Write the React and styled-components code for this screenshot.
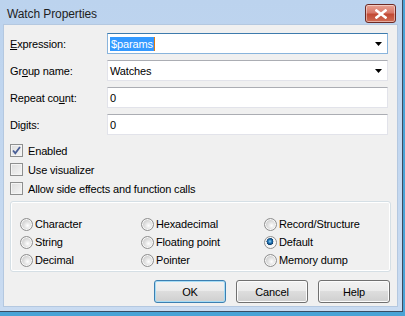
import styled, { createGlobalStyle } from "styled-components";

const GlobalStyle = createGlobalStyle`
  html, body {
    margin: 0;
    padding: 0;
    background: #4aa3d6;
  }
  body {
    font-family: "Liberation Sans", Arial, sans-serif;
    font-size: 11px;
    letter-spacing: -0.15px;
    color: #000;
  }
`;

const fields = [
  { label: "Expression:", idx: 0, value: "$params", combo: true, focused: true },
  { label: "Group name:", idx: 2, value: "Watches", combo: true },
  { label: "Repeat count:", idx: 9, value: "0" },
  { label: "Digits:", idx: 2, value: "0" },
];

const checks = [
  { label: "Enabled", checked: true },
  { label: "Use visualizer" },
  { label: "Allow side effects and function calls" },
];

const radios = [
  "Character", "Hexadecimal", "Record/Structure",
  "String", "Floating point", "Default",
  "Decimal", "Pointer", "Memory dump",
];

function AccessLabel({ text, idx }) {
  return (
    <Label>
      {text.slice(0, idx)}
      <u>{text[idx]}</u>
      {text.slice(idx + 1)}
    </Label>
  );
}

function Arrow() {
  return (
    <svg width="7" height="4" viewBox="0 0 7 4">
      <path d="M0 0h7L3.5 4z" fill="#000" />
    </svg>
  );
}

function CheckMark() {
  return (
    <svg width="9" height="9" viewBox="0 0 9 9">
      <path d="M1 4.5l2.3 2.7L8 1" stroke="#4a5f97" strokeWidth="1.8" fill="none" />
    </svg>
  );
}

export default function App() {
  return (
    <>
      <GlobalStyle />
      <Window>
        <TitleBar>
          <Title>Watch Properties</Title>
          <CloseButton>
            <svg width="12" height="10" viewBox="0 0 12 10">
              <path d="M1.5 1.5l9 7M10.5 1.5l-9 7" stroke="#fff" strokeWidth="2.6" strokeLinecap="square" />
            </svg>
          </CloseButton>
        </TitleBar>
        <Client>
          <Form>
            {fields.map((f) => (
              <Row key={f.label}>
                <AccessLabel text={f.label} idx={f.idx} />
                <Field $focused={f.focused}>
                  {f.focused ? (
                    <Selected>{f.value}</Selected>
                  ) : (
                    <span>{f.value}</span>
                  )}
                  {f.combo && (
                    <ArrowBox>
                      <Arrow />
                    </ArrowBox>
                  )}
                </Field>
              </Row>
            ))}
          </Form>
          <Checks>
            {checks.map((c) => (
              <CheckRow key={c.label}>
                <CheckBox>{c.checked && <CheckMark />}</CheckBox>
                <span>{c.label}</span>
              </CheckRow>
            ))}
          </Checks>
          <GroupBox>
            {radios.map((r) => (
              <RadioItem key={r}>
                <Radio $on={r === "Default"} />
                <span>{r}</span>
              </RadioItem>
            ))}
          </GroupBox>
          <Buttons>
            <Button $default>OK</Button>
            <Button>Cancel</Button>
            <Button>Help</Button>
          </Buttons>
        </Client>
      </Window>
    </>
  );
}

const Window = styled.div`
  background: linear-gradient(#bcd3ee, #c9dbf1);
  border-right: 1px solid #3b4c62;
  border-bottom: 1px solid #3b4c62;
  display: flex;
  flex-direction: column;
  padding: 0 4px 4px 3px;
  width: 395px;
  height: 307px;
`;

const TitleBar = styled.div`
  height: 24px;
  display: flex;
  align-items: center;
  justify-content: space-between;
  padding: 0 2px 0 4px;
  flex-shrink: 0;
`;

const Title = styled.div`
  font-size: 12px;
  letter-spacing: -0.1px;
  color: #1e1e1e;
  margin-top: 3px;
`;

const CloseButton = styled.div`
  width: 29px;
  height: 17px;
  margin-top: 3px;
  border: 1px solid #6d2a24;
  border-radius: 3px;
  background: linear-gradient(#e8a394 0%, #d8796a 45%, #c24a34 55%, #d06d55 100%);
  box-shadow: inset 0 0 0 1px rgba(255, 255, 255, 0.45);
  display: flex;
  align-items: center;
  justify-content: center;
`;

const Client = styled.div`
  flex: 1;
  background: #f0f0f0;
  border: 1px solid #b4c8e0;
  display: flex;
  flex-direction: column;
  padding: 0 6px;
`;

const Form = styled.div`
  display: flex;
  flex-direction: column;
  gap: 6px;
  margin-top: 8px;
`;

const Row = styled.div`
  display: flex;
  align-items: center;
`;

const Label = styled.div`
  width: 97px;
  flex-shrink: 0;
`;

const Field = styled.div`
  width: 281px;
  height: 21px;
  box-sizing: border-box;
  background: #fff;
  border: 1px solid ${(p) => (p.$focused ? "#89b4dc" : "#e2e3ea")};
  border-top-color: ${(p) => (p.$focused ? "#3d7bad" : "#abadb3")};
  display: flex;
  align-items: center;
  padding: 0 0 0 2px;
`;

const Selected = styled.span`
  background: #3399ff;
  color: #fff;
  padding: 1px;
  border-right: 1px solid #e07a10;
`;

const ArrowBox = styled.div`
  margin-left: auto;
  width: 17px;
  display: flex;
  justify-content: center;
  align-items: center;
`;

const Checks = styled.div`
  display: flex;
  flex-direction: column;
  gap: 6px;
  margin-top: 9px;
`;

const CheckRow = styled.div`
  display: flex;
  align-items: center;
  gap: 5px;
  height: 13px;
`;

const CheckBox = styled.div`
  width: 13px;
  height: 13px;
  box-sizing: border-box;
  border: 1px solid #8e8f8f;
  background: linear-gradient(135deg, #dcdcdc, #f6f6f6);
  box-shadow: inset 0 0 0 1px #f4f4f4;
  display: flex;
  align-items: center;
  justify-content: center;
`;

const GroupBox = styled.div`
  margin-top: 6px;
  height: 71px;
  box-sizing: border-box;
  border: 1px solid #d5dfe5;
  border-radius: 3px;
  box-shadow: inset 0 0 0 1px #fff;
  width: 381px;
  display: grid;
  grid-template-columns: 121px 123px 1fr;
  grid-auto-rows: 18px;
  padding: 13px 0 0 9px;
`;

const RadioItem = styled.div`
  display: flex;
  align-items: center;
  gap: 2px;
`;

const Radio = styled.div`
  width: 13px;
  height: 13px;
  box-sizing: border-box;
  border-radius: 50%;
  border: 1px solid #8f8f8f;
  background: ${(p) =>
    p.$on
      ? "radial-gradient(circle at 45% 40%, #9fd8f5 0, #2a7fbf 1.6px, #0a3a6a 3.4px, #ececec 3.6px, #ffffff 6px)"
      : "radial-gradient(circle at 60% 60%, #ffffff 0, #e6e6e6 3px, #cfcfcf 6px)"};
  box-shadow: inset 0 0 0 1px #f8f8f8;
`;

const Buttons = styled.div`
  display: flex;
  justify-content: flex-end;
  gap: 10px;
  margin-top: 8px;
  padding-right: 1px;
`;

const Button = styled.div`
  width: 72px;
  height: 23px;
  box-sizing: border-box;
  border: 1px solid ${(p) => (p.$default ? "#3c7fb1" : "#707070")};
  border-radius: 3px;
  background: linear-gradient(#f2f2f2 0%, #ebebeb 45%, #dddddd 50%, #cfcfcf 100%);
  box-shadow: inset 0 0 0 1px ${(p) => (p.$default ? "#a6dcf5" : "#fcfcfc")};
  display: flex;
  align-items: center;
  justify-content: center;
`;
